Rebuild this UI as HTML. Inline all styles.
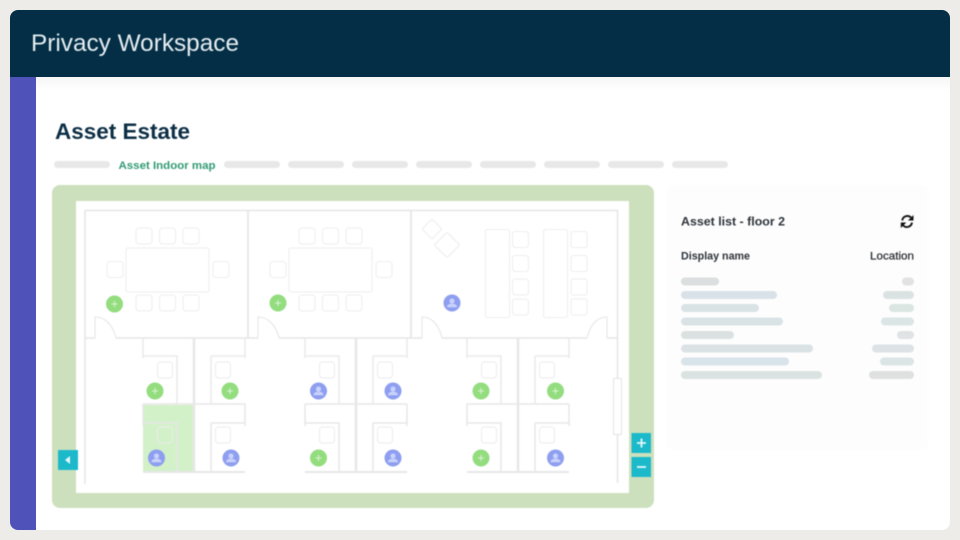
<!DOCTYPE html>
<html>
<head>
<meta charset="utf-8">
<title>Privacy Workspace</title>
<style>
html,body{margin:0;padding:0;width:960px;height:540px;overflow:hidden;background:#eeece8}
svg{display:block;font-family:"Liberation Sans",sans-serif}
.soft{filter:blur(0.4px)}
</style>
</head>
<body>
<svg width="960" height="540" viewBox="0 0 960 540" xmlns="http://www.w3.org/2000/svg">
<defs>
<clipPath id="card"><rect x="10" y="10" width="940" height="520" rx="8"/></clipPath>
<linearGradient id="sh" x1="0" y1="0" x2="0" y2="1"><stop offset="0" stop-color="#f6f6f6"/><stop offset="1" stop-color="#ffffff"/></linearGradient>
<g id="person">
<circle r="8.5" fill="#8e9ef0"/>
<circle cx="0" cy="-2" r="2.6" fill="#c9d2fa"/>
<path d="M-5 4.200c0-2.600 2.200-3.400 5-3.400s5 .8 5 3.400z" fill="#c9d2fa"/>
</g>
<g id="plus">
<circle r="8.5" fill="#93dd7f"/>
<path d="M-3 0H3M0 -3V3" stroke="#d8f3cf" stroke-width="1.100" fill="none"/>
</g>
<g id="cluster" fill="none" stroke="#e7e7e7">
<path d="M0 0V20M0 18H34V66M68 18H102M68 18V66M102 0V20" stroke-width="1.300"/>
<path d="M0 66H102M0 66V88M0 85H34V133M68 85H102M68 85V133M102 66V88" stroke-width="1.500"/>
<path d="M0 134H102" stroke-width="2"/>
<path d="M51 0V134" stroke-width="2.400"/>
<rect x="14.500" y="24" width="15" height="16" rx="3" stroke-width="1" stroke="#ececec"/>
<rect x="72.500" y="24" width="15" height="16" rx="3" stroke-width="1" stroke="#ececec"/>
<rect x="14.500" y="89" width="15" height="16" rx="3" stroke-width="1" stroke="#ececec"/>
<rect x="72.500" y="89" width="15" height="16" rx="3" stroke-width="1" stroke="#ececec"/>
</g>
<g id="room" fill="none" stroke="#eeeeee" stroke-width="1.100">
<rect x="19" y="38" width="83" height="44" rx="2"/>
<rect x="29" y="18" width="16" height="16" rx="3"/>
<rect x="52.500" y="18" width="16" height="16" rx="3"/>
<rect x="76" y="18" width="16" height="16" rx="3"/>
<rect x="29" y="85" width="16" height="16" rx="3"/>
<rect x="52.500" y="85" width="16" height="16" rx="3"/>
<rect x="76" y="85" width="16" height="16" rx="3"/>
<rect x="0" y="51.500" width="16" height="16" rx="3"/>
<rect x="106" y="51.500" width="16" height="16" rx="3"/>
</g>
</defs>

<g clip-path="url(#card)">
<rect x="10" y="10" width="940" height="520" fill="#ffffff"/>
<rect x="36" y="77" width="914" height="14" fill="url(#sh)"/>
<rect x="10" y="10" width="940" height="67" fill="#032e45"/>
<rect x="10" y="77" width="26" height="453" fill="#4f52b8"/>
</g>

<g class="soft">
<text x="31" y="51" font-size="24" fill="#e6eef2" textLength="208" lengthAdjust="spacingAndGlyphs">Privacy Workspace</text>
<text x="55" y="139" font-size="22" font-weight="700" fill="#0c2e45" textLength="135" lengthAdjust="spacingAndGlyphs">Asset Estate</text>

<g fill="#e8e8e8">
<rect x="54" y="161" width="56" height="7" rx="3.500"/>
<rect x="224" y="161" width="56" height="7" rx="3.500"/>
<rect x="288" y="161" width="56" height="7" rx="3.500"/>
<rect x="352" y="161" width="56" height="7" rx="3.500"/>
<rect x="416" y="161" width="56" height="7" rx="3.500"/>
<rect x="480" y="161" width="56" height="7" rx="3.500"/>
<rect x="544" y="161" width="56" height="7" rx="3.500"/>
<rect x="608" y="161" width="56" height="7" rx="3.500"/>
<rect x="672" y="161" width="56" height="7" rx="3.500"/>
</g>
<text x="118.500" y="169" font-size="11" font-weight="700" fill="#329a74" textLength="97" lengthAdjust="spacingAndGlyphs">Asset Indoor map</text>

<!-- map -->
<rect x="52" y="185" width="602" height="323" rx="8" fill="#cde0bd"/>
<rect x="76" y="201" width="553" height="292" fill="#ffffff"/>
<rect x="143" y="405" width="50" height="67" fill="#d2f1c8"/>

<g fill="none" stroke="#e6e6e6" stroke-width="1.500">
<path d="M85 484V210.500H617.500V483"/>
<path d="M248 210V338M411 210V338" stroke-width="1.800"/>
<path d="M85 338H95M116 338H258M279 338H422M442 338H587M607 338H617"/>
<path d="M95 338V317C105 317 113 325 116 338" stroke-width="1.100"/>
<path d="M258 338V317C268 317 276 325 279 338" stroke-width="1.100"/>
<path d="M422 338V317C432 317 439 325 442 338" stroke-width="1.100"/>
<path d="M607 338V317C597 317 590 325 587 338" stroke-width="1.100"/>
<rect x="613.500" y="378.500" width="8" height="56" fill="#fff" stroke-width="1.100"/>
</g>

<use href="#room" x="107" y="210"/>
<use href="#room" x="270" y="210"/>

<g fill="none" stroke="#eeeeee" stroke-width="1.100">
<rect x="425" y="222" width="14" height="14" rx="1.500" transform="rotate(45 432 229)"/>
<rect x="438" y="236" width="18" height="18" rx="1.500" transform="rotate(45 447 245)"/>
<rect x="485.500" y="229.500" width="24" height="88" rx="2"/>
<rect x="543.500" y="229.500" width="24" height="88" rx="2"/>
<rect x="512.500" y="231.500" width="16" height="16" rx="3"/>
<rect x="512.500" y="255.500" width="16" height="16" rx="3"/>
<rect x="512.500" y="279" width="16" height="16" rx="3"/>
<rect x="512.500" y="299" width="16" height="16" rx="3"/>
<rect x="571" y="231.500" width="16" height="16" rx="2"/>
<rect x="571" y="255.500" width="16" height="16" rx="2"/>
<rect x="571" y="279" width="16" height="16" rx="2"/>
<rect x="571" y="299" width="16" height="16" rx="2"/>
</g>

<use href="#cluster" x="143" y="338"/>
<use href="#cluster" x="305" y="338"/>
<use href="#cluster" x="467" y="338"/>

<use href="#plus" x="114.500" y="304"/>
<use href="#plus" x="278" y="303"/>
<use href="#person" x="452" y="303"/>
<use href="#plus" x="155" y="391"/>
<use href="#plus" x="230" y="391"/>
<use href="#person" x="156.500" y="458"/>
<use href="#person" x="231" y="458"/>
<use href="#person" x="318.500" y="391"/>
<use href="#person" x="393" y="391"/>
<use href="#plus" x="318.500" y="458"/>
<use href="#person" x="393" y="458"/>
<use href="#plus" x="481" y="391"/>
<use href="#plus" x="555.500" y="391"/>
<use href="#plus" x="481" y="458"/>
<use href="#person" x="555.500" y="458"/>

<rect x="58" y="450" width="20" height="20" fill="#1cb9cb"/>
<path d="M65 460L70 456V464Z" fill="#e6f8fa"/>
<rect x="631.500" y="433" width="19.500" height="20" fill="#1cb9cb"/>
<path d="M637 443H646M641.500 438.500V447.500" stroke="#e6f8fa" stroke-width="1.800" fill="none"/>
<rect x="631.500" y="457" width="19.500" height="20" fill="#1cb9cb"/>
<path d="M637 467H646" stroke="#e6f8fa" stroke-width="1.800" fill="none"/>

<!-- right panel -->
<rect x="667" y="185" width="261" height="265" rx="6" fill="#fdfdfd"/>
<text x="681" y="225.500" font-size="12" font-weight="700" fill="#2b3238" textLength="104" lengthAdjust="spacingAndGlyphs">Asset list - floor 2</text>
<g fill="none" stroke="#111" stroke-width="1.900">
<path d="M902.200 220.500A5.200 5.200 0 0 1 911 217.500"/>
<path d="M912 222.500A5.200 5.200 0 0 1 903.200 225.500"/>
</g>
<path d="M913.500 215V220.500H908ZM900.800 228V222.500H906.300Z" fill="#111"/>
<text x="681" y="259.500" font-size="11" font-weight="700" fill="#2b3238" textLength="69" lengthAdjust="spacingAndGlyphs">Display name</text>
<text x="914" y="259.500" font-size="11" fill="#1f262b" stroke="#1f262b" stroke-width="0.200" text-anchor="end" textLength="44" lengthAdjust="spacingAndGlyphs">Location</text>

<g>
<rect x="681" y="277.500" width="38" height="8" rx="4" fill="#dbdfdf"/>
<rect x="681" y="291" width="96" height="8" rx="4" fill="#d9e2e8"/>
<rect x="681" y="304" width="78" height="8" rx="4" fill="#d9e3e6"/>
<rect x="681" y="317.500" width="102" height="8" rx="4" fill="#d9e3e6"/>
<rect x="681" y="331" width="53" height="8" rx="4" fill="#dbe1e1"/>
<rect x="681" y="344.500" width="132" height="8" rx="4" fill="#dbe2e5"/>
<rect x="681" y="357.500" width="108" height="8" rx="4" fill="#d9e3ea"/>
<rect x="681" y="371" width="141" height="8" rx="4" fill="#dbe3e2"/>
<rect x="902" y="277.500" width="12" height="8" rx="4" fill="#e2e2e2"/>
<rect x="883" y="291" width="31" height="8" rx="4" fill="#dbe3e2"/>
<rect x="889" y="304" width="25" height="8" rx="4" fill="#dbe5e2"/>
<rect x="881" y="317.500" width="33" height="8" rx="4" fill="#dbe5e6"/>
<rect x="897" y="331" width="17" height="8" rx="4" fill="#dfe3e3"/>
<rect x="872" y="344.500" width="42" height="8" rx="4" fill="#dde2e6"/>
<rect x="880" y="357.500" width="34" height="8" rx="4" fill="#dbe5e6"/>
<rect x="869" y="371" width="45" height="8" rx="4" fill="#dfe0e0"/>
</g>
</g>
</svg>
</body>
</html>
